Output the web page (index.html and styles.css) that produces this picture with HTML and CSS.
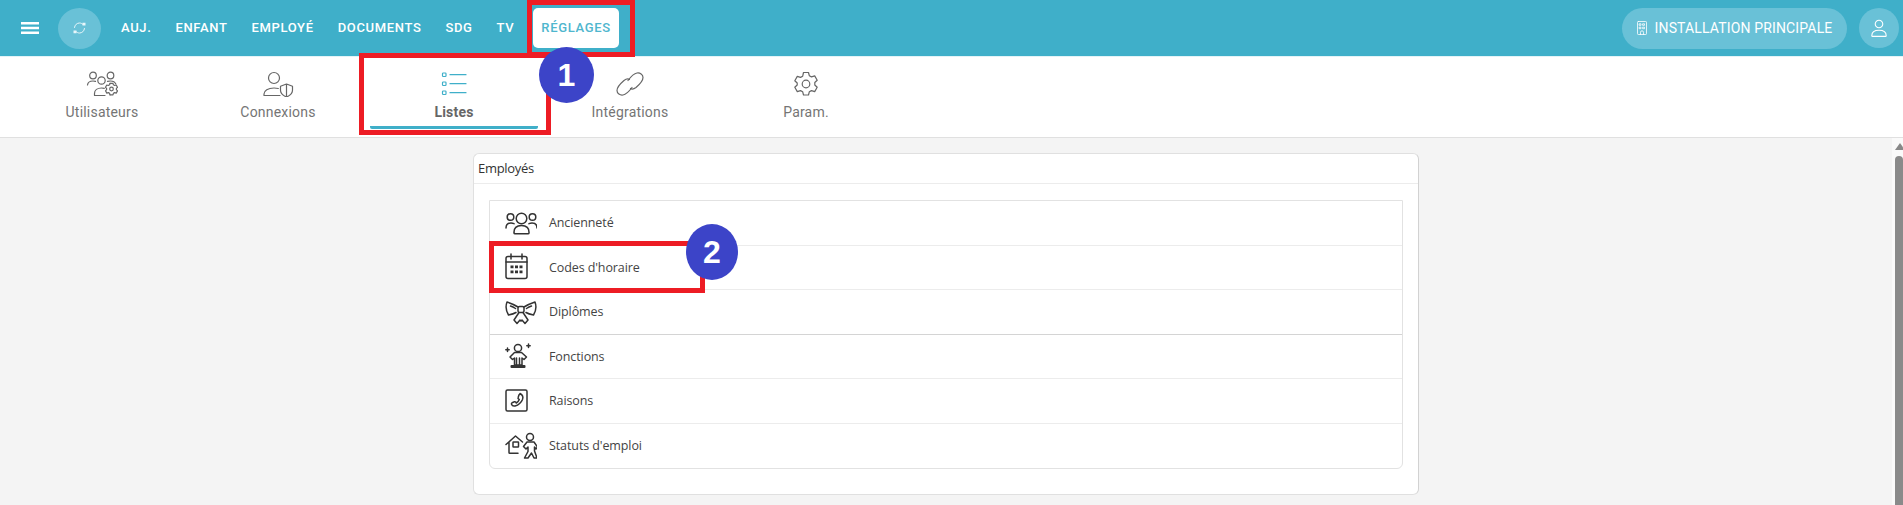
FILE: index.html
```html
<!DOCTYPE html>
<html lang="fr">

<head>
    <meta charset="UTF-8">
    <meta name="viewport" content="width=device-width, initial-scale=1.0">
    <title>Réglages - Listes</title>
    <link rel="stylesheet" href="styles.css">
</head>

<body>
    <!-- Barre du haut -->
    <div class="topbar">
        <svg class="burger" viewBox="0 0 18 12"><path d="M0 1.300h18M0 6h18M0 10.700h18" /></svg>
        <div class="round-btn refresh">
            <svg viewBox="0 0 13 12"><path d="M1.500 5.500C1.800 2.800 4 1 6.500 1c1.300 0 2.400.4 3.300 1.300M11.500 6.500C11.200 9.200 9 11 6.500 11c-1.300 0-2.400-.4-3.300-1.300" /><path class="tip" d="M9.500 .8h3v2.800h-3zM.5 8.400h3v2.800h-3z" /></svg>
        </div>
        <div class="top-nav">
            <div class="top-link">AUJ.</div>
            <div class="top-link">ENFANT</div>
            <div class="top-link">EMPLOYÉ</div>
            <div class="top-link">DOCUMENTS</div>
            <div class="top-link">SDG</div>
            <div class="top-link">TV</div>
            <div class="top-link active">RÉGLAGES</div>
        </div>
        <div class="top-right">
            <div class="site-btn">
                <svg viewBox="0 0 10 14"><rect x=".5" y=".5" width="9" height="13" rx=".8" /><path d="M2.500 2.800h1.500v1.500H2.500zM6 2.800h1.500v1.500H6zM2.500 6.200h1.500v1.500H2.500zM6 6.200h1.500v1.500H6zM3.500 13.500v-2.200a1.500 1.500 0 0 1 3 0v2.200" /></svg>
                INSTALLATION PRINCIPALE
            </div>
            <div class="round-btn user">
                <svg viewBox="0 0 20 20"><circle cx="10" cy="5.500" r="4.200" /><path d="M2 18.500c0-4 3-6 8-6s8 2 8 6c0 .5-.3.8-.8.8H2.800c-.5 0-.8-.3-.8-.8z" /></svg>
            </div>
        </div>
    </div>

    <!-- Onglets -->
    <div class="tabs">
        <div class="tab">
            <svg viewBox="0 0 32 26"><circle cx="7" cy="4.500" r="3.300" /><circle cx="24.500" cy="4.500" r="3.300" /><circle cx="15.500" cy="9.500" r="3.700" /><path d="M1.500 14c.3-2.500 2.500-4 5.500-4 1 0 1.800.1 2.500.4M8.500 24.500v-2c0-3.300 3-5.500 7-5.500 1 0 2 .1 2.800.4M8.500 24.500H19M21.500 10.400c1-.3 2-.4 3-.4 2.500 0 4.500 1 5.300 3" /><path d="M24.500 14.500h3l.4 1.500 1.300.7 1.500-.5 1.300 2.300-1.100 1.100v1.300l1.100 1.100-1.300 2.300-1.500-.5-1.300.7-.4 1.500h-3" transform="translate(-.5 -2.200)" /><path d="M24 12.300l-.4 1.500-1.300.7-1.500-.5-1.300 2.300 1.100 1.100v1.300l-1.100 1.100 1.300 2.300 1.500-.5 1.300.7.400 1.500" /><circle cx="25.500" cy="18" r="1.800" /></svg>
            <span>Utilisateurs</span>
        </div>
        <div class="tab">
            <svg viewBox="0 0 32 26"><circle cx="12" cy="7" r="5.500" /><path d="M2 24.500v-1.500c0-3.500 4-6 10-6 1.500 0 3 .2 4.300.5M2 24.500h16" /><path d="M24.500 13l6 2.300v4c0 3.200-2.300 5.200-6 6.700-3.700-1.500-6-3.500-6-6.700v-4zM24.500 13v13" /></svg>
            <span>Connexions</span>
        </div>
        <div class="tab active">
            <svg viewBox="0 0 26 26"><rect x="1.500" y="2" width="3.500" height="3.500" rx=".8" /><rect x="1.500" y="11" width="3.500" height="3.500" rx=".8" /><rect x="1.500" y="20" width="3.500" height="3.500" rx=".8" /><path d="M9 3.700h16M9 12.700h16M9 21.700h16" /></svg>
            <span>Listes</span>
        </div>
        <div class="tab">
            <svg viewBox="0 0 30 26"><path d="M13 9.500c3-4 6-7 9-7.500 3-.5 6 1.500 6 4.500 0 3-3.500 7-7 10-2 1.500-4 2-5.500 1" /><path d="M17 16.500c-3 4-6 7-9 7.500-3 .5-6-1.500-6-4.500 0-3 3.500-7 7-10 2-1.500 4-2 5.500-1" /></svg>
            <span>Intégrations</span>
        </div>
        <div class="tab">
            <svg viewBox="0 0 26 26"><path d="M10.500 1.500h5l.8 3.200 2.200 1.200 3.200-1 2.500 4.300-2.400 2.300v2.500l2.400 2.300-2.500 4.300-3.200-1-2.200 1.200-.8 3.200h-5l-.8-3.200-2.200-1.200-3.200 1-2.500-4.300 2.400-2.300V12L1.800 9.700l2.500-4.300 3.200 1 2.200-1.200z" /><circle cx="13" cy="13" r="3.800" /></svg>
            <span>Param.</span>
        </div>
    </div>

    <div class="main">
        <div class="content">
            <div class="card">
                <div class="card-title">Employés</div>
                <div class="card-body">
                    <div class="list">
                        <div class="list-row">
                            <svg viewBox="0 0 32 28"><circle cx="16.500" cy="9.500" r="5.300" /><circle cx="5.500" cy="8" r="3.300" /><circle cx="27.500" cy="8" r="3.300" /><path d="M9 24c-.3-5 2.500-7.500 7.500-7.500S24.300 19 24 24c-.1.500-.4.800-1 .8H10c-.6 0-.9-.3-1-.8zM1 19c0-3 2-5 5-5 1 0 2 .2 3 .6M32 19c0-3-2-5-5-5-1 0-2 .2-3 .6" /></svg>
                            <span>Ancienneté</span>
                        </div>
                        <div class="list-row">
                            <svg viewBox="0 0 32 28"><rect x="1" y="3.500" width="21" height="22" rx="2" /><path d="M1 9h21M6 1v5M17 1v5" /><path class="dots" d="M5.500 12.500h3v2.800h-3zM10 12.500h3v2.800h-3zM14.500 12.500h3v2.800h-3zM5.500 17.500h3v2.800h-3zM10 17.500h3v2.800h-3zM14.500 17.500h3v2.800h-3z" /></svg>
                            <span>Codes d'horaire</span>
                        </div>
                        <div class="list-row">
                            <svg viewBox="0 0 32 28"><path d="M13 9C9 6.500 5 5 2 4c-1.500 4-1.500 8 1.500 13 2.500-.5 5-1 7.500-2.500M19 9c4-2.500 8-4 11-5 1.500 4 1.500 8-1.500 13-2.500-.5-5-1-7.500-2.500M5.500 8c1.500.5 3.500 1.500 5 2.500M26.500 8c-1.500.5-3.500 1.500-5 2.500" /><rect x="13" y="8.500" width="6" height="6" rx="1.500" /><path d="M14 14.500L9 22l3 3.500 3-3.500 1 1 1-1 3 3.500 3-3.500-5-7.500" /></svg>
                            <span>Diplômes</span>
                        </div>
                        <div class="list-row">
                            <svg viewBox="0 0 32 28"><circle cx="13" cy="6" r="3.600" /><path d="M9.500 10.500h7l5 4.500-2.500 2.500-2-1.500V23H9.500v-7l-2 1.500L5 15zM11.500 16v7M14.500 16v7" /><rect class="base" x="5.500" y="23" width="15" height="3" rx="1" /><path d="M2.500 6v3.500M.8 7.800h3.400M23.500 2v3.500M21.800 3.800h3.400" /></svg>
                            <span>Fonctions</span>
                        </div>
                        <div class="list-row">
                            <svg viewBox="0 0 32 28"><rect x="1" y="3" width="21" height="21" rx="1.500" /><path d="M15 6.500c2.300 1.200 3.400 3.600 2.500 6-1.300 3.200-4 5.500-7.500 6.500-1.500.3-3-.4-3.500-1.800-.2-.6 0-1.100.5-1.400l2.500-1c.5-.2.900-.1 1.200.3l.6.900c1.300-.8 2.400-2 3-3.500l-.8-.6c-.4-.3-.6-.7-.4-1.200l.8-2.700c.2-.6.700-.7 1.100-.5z" /></svg>
                            <span>Raisons</span>
                        </div>
                        <div class="list-row">
                            <svg viewBox="0 0 32 28"><path d="M1 12.500L10.500 4l7 6M4 10.500v10c0 .5.300.8.800.8H13" /><rect x="8" y="10" width="5.500" height="5" rx=".5" /><circle cx="25" cy="5" r="3.500" /><path d="M22 10l-3.500 4.500 2.500 2.500 2-2v4.500L19.500 26H23l3.500-5 2.500 5h3l-2.500-7v-4l1.500 2 1.500-2L29 10z" /></svg>
                            <span>Statuts d'emploi</span>
                        </div>
                    </div>
                </div>
            </div>
        </div>
        <div class="scrollbar">
            <div class="scroll-arrow"></div>
            <div class="scroll-thumb"></div>
        </div>
    </div>

    <!-- Annotations -->
    <div class="mark mark-nav"></div>
    <div class="mark mark-tab"></div>
    <div class="mark mark-row"></div>
    <div class="step step-1">1</div>
    <div class="step step-2">2</div>
</body>

</html>
```

FILE: styles.css
```css
* {
    margin: 0;
    padding: 0;
    box-sizing: border-box;
}

html,
body {
    height: 505px;
    overflow: hidden;
}

body {
    position: relative;
    background: #f4f4f4;
    font-family: Roboto, "Liberation Sans", sans-serif;
}

svg {
    fill: none;
    stroke-linecap: round;
    stroke-linejoin: round;
}

.topbar {
    height: 56px;
    background: #3fafc9;
    display: flex;
    align-items: center;
    padding-right: 4px;
    color: white;
}

.burger {
    width: 18px;
    height: 12px;
    margin-left: 21px;
    stroke: white;
    stroke-width: 2.6;
    stroke-linecap: butt;
}

.round-btn {
    width: 43px;
    height: 41px;
    border-radius: 50%;
    background: #69c1d7;
    display: flex;
    align-items: center;
    justify-content: center;
}

.refresh {
    margin-left: 19px;
}

.refresh svg {
    width: 13px;
    height: 12px;
    stroke: #e8f6fa;
    stroke-width: 1;
}

.refresh .tip {
    fill: #e8f6fa;
    stroke: none;
}

.top-nav {
    display: flex;
    align-items: center;
    margin-left: 12px;
}

.top-link {
    padding: 0 8px;
    height: 40px;
    line-height: 40px;
    font-size: 13px;
    font-weight: 500;
    letter-spacing: .65px;
    margin-right: 8px;
}

.top-link.active {
    background: white;
    color: #4fb6ce;
    border-radius: 5px;
    margin-left: 3px;
    padding: 0 8px;
}

.top-right {
    margin-left: auto;
    display: flex;
    align-items: center;
    gap: 12px;
}

.site-btn {
    width: 225px;
    height: 41px;
    border-radius: 21px;
    background: #69c1d7;
    display: flex;
    align-items: center;
    justify-content: center;
    gap: 8px;
    font-size: 14px;
    letter-spacing: .15px;
}

.site-btn svg {
    width: 10px;
    height: 14px;
    stroke: white;
    stroke-width: .8;
}

.user {
    width: 40px;
    height: 40px;
}

.user svg {
    width: 18px;
    height: 18px;
    stroke: white;
    stroke-width: 1.2;
}

.tabs {
    height: 82px;
    background: white;
    border-top: 1px solid #e3f3f7;
    border-bottom: 1px solid #e0e0e0;
    display: flex;
    gap: 8px;
    padding-left: 18px;
}

.tab {
    width: 168px;
    display: flex;
    flex-direction: column;
    align-items: center;
    padding-top: 14px;
    gap: 7px;
    font-size: 14px;
    color: #757575;
    letter-spacing: .2px;
}

.tab svg {
    height: 26px;
    width: 32px;
    stroke: #666;
    stroke-width: 1.2;
}

.tab.active {
    color: #666;
    font-weight: 700;
    border-bottom: 3px solid #3fafc9;
    border-radius: 2px;
    height: 72px;
}

.tab.active svg {
    stroke: #3fafc9;
}

.main {
    display: flex;
    height: 367px;
}

.content {
    flex: 1;
    display: flex;
    justify-content: center;
    padding-top: 15px;
}

.card {
    width: 946px;
    height: 342px;
    background: white;
    border: 1px solid #e0e0e0;
    border-right-color: #d2d2d2;
    border-radius: 6px;
    font-family: "Open Sans", sans-serif;
    color: #333;
}

.card-title {
    height: 30px;
    line-height: 28px;
    padding-left: 4px;
    border-bottom: 1px solid #ececec;
    font-size: 13px;
    letter-spacing: -.3px;
}

.card-body {
    padding: 16px 15px 0;
}

.list {
    border: 1px solid #e2e2e2;
    border-radius: 0 0 6px 6px;
}

.list-row {
    height: 44.5px;
    display: flex;
    align-items: center;
    padding-left: 15px;
    gap: 12px;
    border-bottom: 1px solid #ececec;
    font-size: 12.5px;
    letter-spacing: -.1px;
    color: #444;
}

.list-row:nth-child(3) {
    border-bottom-color: #d4d4d4;
}

.list-row:last-child {
    border-bottom: none;
}

.list-row svg {
    width: 32px;
    height: 28px;
    stroke: #333;
    stroke-width: 1.5;
}

.list-row .dots,
.list-row .base {
    fill: #333;
    stroke: none;
}

.scrollbar {
    width: 11px;
    background: #fafafa;
    padding-left: 3px;
}

.scroll-arrow {
    width: 0;
    height: 0;
    margin-top: 5px;
    border-left: 5px solid transparent;
    border-right: 5px solid transparent;
    border-bottom: 7px solid #888;
}

.scroll-thumb {
    height: 350px;
    margin-top: 6px;
    background: #8a8a8a;
    border-radius: 4px 4px 0 0;
}

/* Annotations par-dessus la capture */
.mark {
    position: absolute;
    border: 5px solid #ed1c24;
}

.mark-nav {
    left: 527px;
    top: 0;
    width: 108px;
    height: 57px;
}

.mark-tab {
    left: 359px;
    top: 53px;
    width: 192px;
    height: 82px;
}

.mark-row {
    left: 489px;
    top: 241px;
    width: 216px;
    height: 52px;
}

.step {
    position: absolute;
    border-radius: 50%;
    background: #3c44c8;
    color: white;
    font-family: "Liberation Sans", sans-serif;
    font-weight: 700;
    font-size: 32px;
    display: flex;
    align-items: center;
    justify-content: center;
}

.step-1 {
    left: 539px;
    top: 47px;
    width: 55px;
    height: 56px;
}

.step-2 {
    left: 686px;
    top: 224px;
    width: 52px;
    height: 56px;
}
```
